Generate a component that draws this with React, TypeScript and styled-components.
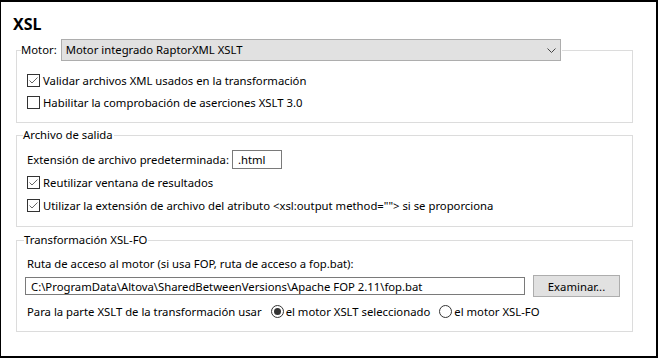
import styled, { createGlobalStyle } from "styled-components";
import { useState } from "react";

const GlobalStyle = createGlobalStyle`
  body {
    margin: 0;
    background: #fff;
    font-family: "Noto Sans", "Open Sans", sans-serif;
    font-size: 11.3px;
    color: #000;
  }
`;

const Frame = styled.div`
  width: 658px;
  height: 358px;
  box-sizing: border-box;
  border: 2px solid #000;
  border-left-width: 1px;
  padding: 0 23px 0 12px;
  display: flex;
  flex-direction: column;
  background: #fff;
`;

const Title = styled.h1`
  margin: 12px 0 0 0;
  font-size: 16px;
  line-height: 20px;
  font-weight: 700;
`;

const Group = styled.fieldset<{ $top: number; $bottom: number }>`
  margin: ${(p) => p.$top}px 0 0 3px;
  padding: 0 0 ${(p) => p.$bottom}px 4px;
  border: 1px solid #dcdcdc;
  min-width: 0;
`;

const Legend = styled.legend<{ $indent: number }>`
  padding: 0 1px 0 0;
  margin-left: ${(p) => p.$indent}px;
  line-height: 16px;
  display: flex;
  align-items: center;
`;

const GroupBody = styled.div<{ $top: number }>`
  padding: ${(p) => p.$top}px 0 0 6px;
  display: flex;
  flex-direction: column;
`;

const Row = styled.div<{ $h: number; $gap?: number }>`
  height: ${(p) => p.$h}px;
  margin-top: ${(p) => p.$gap ?? 0}px;
  display: flex;
  align-items: center;
  white-space: nowrap;
`;

const Select = styled.div`
  width: 500px;
  height: 22px;
  box-sizing: border-box;
  margin-left: 4px;
  border: 1px solid #adadad;
  background: #e1e1e1;
  display: flex;
  align-items: center;
  justify-content: space-between;
  padding: 0 4px 0 4px;
`;

const TextBox = styled.div<{ $w: number; $h: number; $left?: number }>`
  width: ${(p) => p.$w}px;
  height: ${(p) => p.$h}px;
  margin-left: ${(p) => p.$left ?? 0}px;
  box-sizing: border-box;
  border: 1px solid #7a7a7a;
  background: #fff;
  display: flex;
  align-items: center;
  padding-left: 5px;
`;

const Button = styled.button`
  width: 87px;
  height: 22px;
  margin-left: 8px;
  border: 1px solid #adadad;
  background: #e1e1e1;
  font: inherit;
  color: #000;
  padding: 0;
`;

const CheckLabel = styled.label`
  display: flex;
  align-items: center;
  gap: 3px;
  cursor: default;
`;

const Box = styled.span`
  width: 13px;
  height: 13px;
  box-sizing: border-box;
  border: 1px solid #333;
  background: #fff;
  display: inline-flex;
  align-items: center;
  justify-content: center;
`;

const Radio = styled.span<{ $on: boolean }>`
  width: 13px;
  height: 13px;
  box-sizing: border-box;
  border: 1px solid #333;
  border-radius: 50%;
  display: inline-flex;
  align-items: center;
  justify-content: center;
  margin-left: 9px;
  margin-right: 2px;

  &::after {
    content: "";
    width: 7px;
    height: 7px;
    border-radius: 50%;
    background: ${(p) => (p.$on ? "#333" : "transparent")};
  }
`;

const Check = ({ checked, children }: { checked: boolean; children: React.ReactNode }) => (
  <CheckLabel>
    <Box>
      {checked && (
        <svg width="11" height="11" viewBox="0 0 11 11">
          <polyline points="1.5,5.5 4,8 9.5,2.5" fill="none" stroke="#666" strokeWidth="1" />
        </svg>
      )}
    </Box>
    {children}
  </CheckLabel>
);

const Chevron = () => (
  <svg width="9" height="5" viewBox="0 0 9 5">
    <polyline points="0.5,0.5 4.5,4.5 8.5,0.5" fill="none" stroke="#444" strokeWidth="1" />
  </svg>
);

const App = () => {
  const [engine] = useState<"xslt" | "fo">("xslt");

  return (
    <>
      <GlobalStyle />
      <Frame>
        <Title>XSL</Title>

        <Group $top={5} $bottom={9}>
          <Legend $indent={0}>
            Motor:
            <Select>
              <span>Motor integrado RaptorXML XSLT</span>
              <Chevron />
            </Select>
          </Legend>
          <GroupBody $top={8}>
            <Row $h={22}>
              <Check checked>Validar archivos XML usados en la transformación</Check>
            </Row>
            <Row $h={22}>
              <Check checked={false}>Habilitar la comprobación de aserciones XSLT 3.0</Check>
            </Row>
          </GroupBody>
        </Group>

        <Group $top={4} $bottom={9}>
          <Legend $indent={2}>Archivo de salida</Legend>
          <GroupBody $top={5}>
            <Row $h={23}>
              Extensión de archivo predeterminada:
              <TextBox $w={50} $h={19} $left={3}>.html</TextBox>
            </Row>
            <Row $h={23}>
              <Check checked>Reutilizar ventana de resultados</Check>
            </Row>
            <Row $h={23}>
              <Check checked>
                Utilizar la extensión de archivo del atributo &lt;xsl:output method=""&gt; si se proporciona
              </Check>
            </Row>
          </GroupBody>
        </Group>

        <Group $top={5} $bottom={9}>
          <Legend $indent={3}>Transformación XSL-FO</Legend>
          <GroupBody $top={5}>
            <Row $h={20}>Ruta de acceso al motor (si usa FOP, ruta de acceso a fop.bat):</Row>
            <Row $h={22} $gap={2}>
              <TextBox $w={500} $h={18} $left={-2}>
                C:\ProgramData\Altova\SharedBetweenVersions\Apache FOP 2.11\fop.bat
              </TextBox>
              <Button>Examinar...</Button>
            </Row>
            <Row $h={22} $gap={3}>
              Para la parte XSLT de la transformación usar
              <Radio $on={engine === "xslt"} />
              el motor XSLT seleccionado
              <Radio $on={engine === "fo"} />
              el motor XSL-FO
            </Row>
          </GroupBody>
        </Group>
      </Frame>
    </>
  );
};

export default App;
